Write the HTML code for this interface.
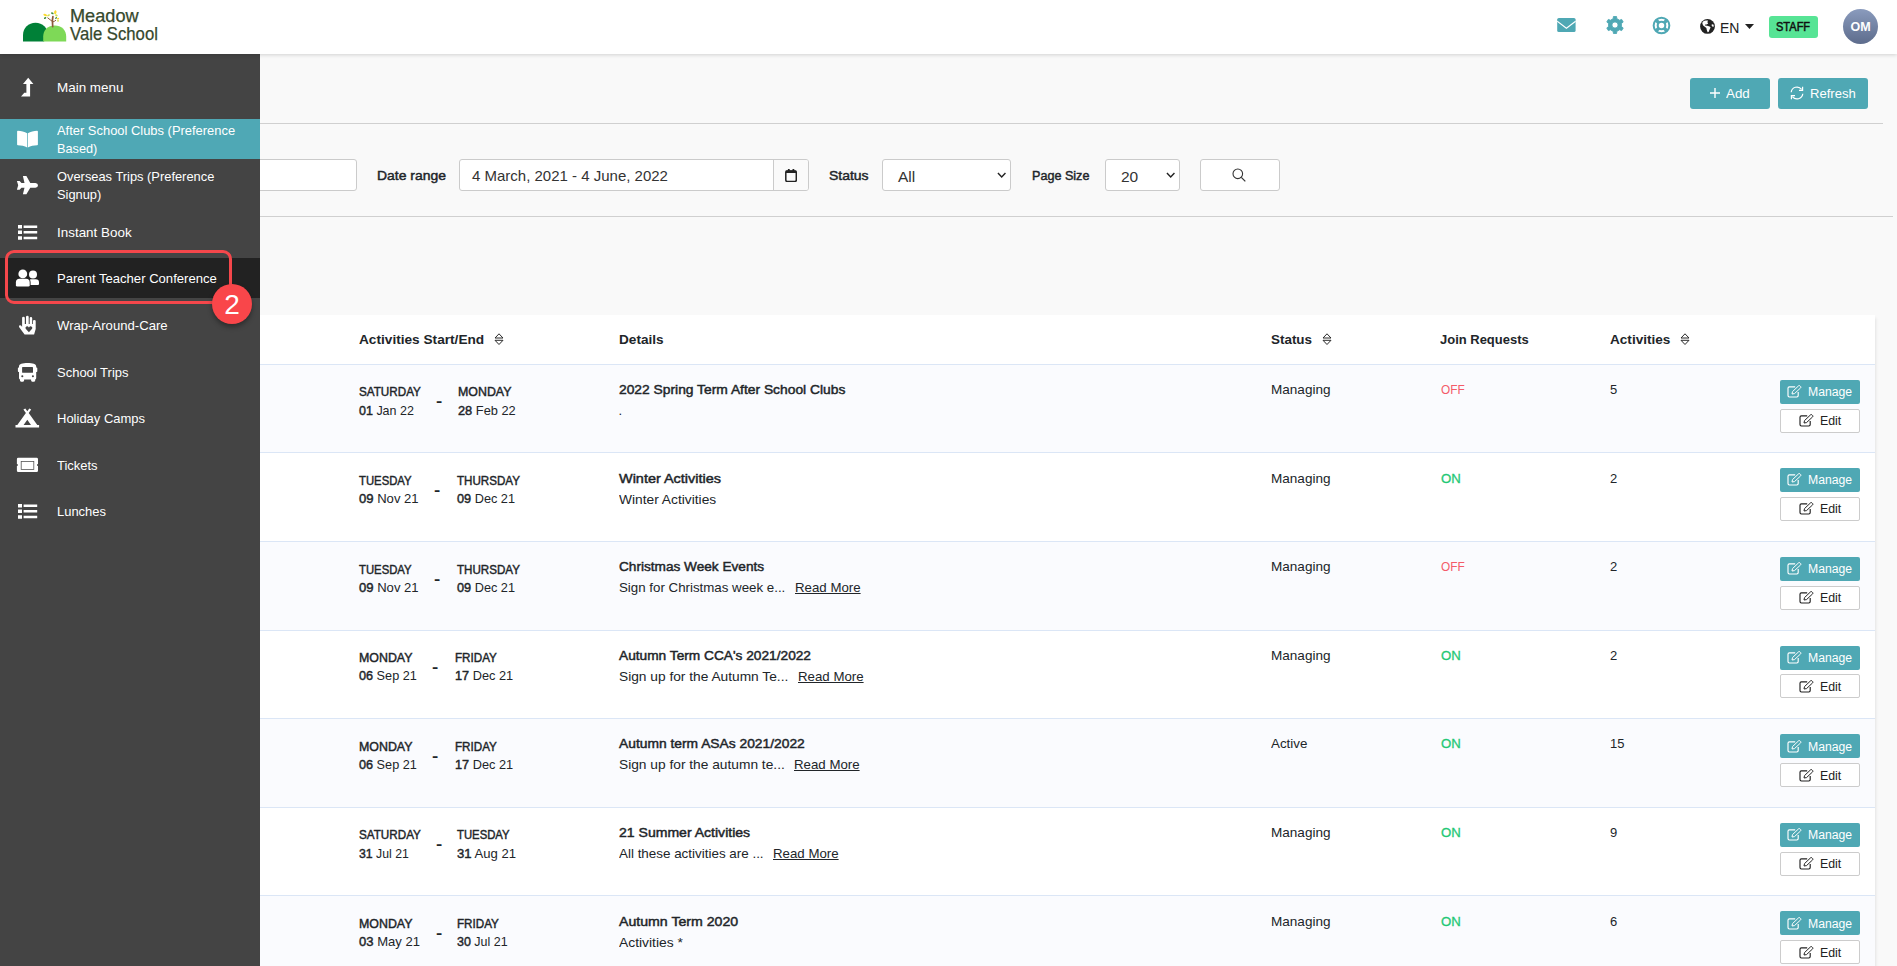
<!DOCTYPE html>
<html lang="en">
<head>
<meta charset="utf-8">
<title>After School Clubs (Preference Based)</title>
<style>
*{box-sizing:border-box;margin:0;padding:0}
html,body{width:1897px;height:966px;overflow:hidden}
body{font-family:"Liberation Sans",sans-serif;font-size:13px;color:#212529;background:#f9f9f9;position:relative}
.a{position:absolute;white-space:nowrap}
b{font-weight:bold}
.row b,.lbl{font-weight:normal;-webkit-text-stroke:.45px currentColor}
.on{font-weight:normal;-webkit-text-stroke:.3px currentColor}
.fx{display:inline-block;transform-origin:0 50%;white-space:nowrap}
#hdr{position:absolute;left:0;top:0;width:1897px;height:54px;background:#fff;box-shadow:0 1px 4px rgba(0,0,0,.16);z-index:5}
#side{position:absolute;left:0;top:54px;width:260px;height:912px;background:#444;z-index:4}
.mi{position:absolute;left:0;width:260px;height:40px;color:#fff}
.mi .tx{position:absolute;left:57px;top:12px;font-size:13px;line-height:17.5px;width:195px}
.mi .tx.two{top:3px}
.mi svg{position:absolute}
.mi.act{background:#4fa8b5}
.mi.hov{background:#222}
.btn{position:absolute;background:#4fa8b4;color:#fff;border-radius:3px;height:31px;top:78px}
.hr{position:absolute;height:1px;background:#d0d0d0;left:260px}
.inp{position:absolute;top:159px;height:32px;background:#fff;border:1px solid #cbcbcb;border-radius:3px}
.lbl{position:absolute;top:168px;font-size:13px;line-height:16px;white-space:nowrap}
#tbl{position:absolute;left:0;top:315px;width:1875px;height:660px;background:#fff;box-shadow:1px 3px 3px rgba(0,0,0,.09)}
.row{position:absolute;left:0;width:1875px;height:89px;border-top:1px solid #dbe6f6}
.row.odd{background:#fafbfe}
.th{position:absolute;top:17px;font-weight:bold;font-size:13px;line-height:16px;white-space:nowrap}
.c{position:absolute;white-space:nowrap;font-size:13px;line-height:16px}
.mbtn{position:absolute;left:1780px;width:80px;height:24px;border-radius:2px;font-size:12px}
.mbtn.m{background:#4fa8b4;color:#fff}
.mbtn.e{background:#fff;border:1px solid #ccc;color:#222}
.mbtn>span{position:absolute;top:4px;line-height:16px}
.mbtn svg{position:absolute}
.on{color:#1fc875}
.off{color:#f45b69}
</style>
</head>
<body>
<div class="btn" style="left:1690px;width:80px"><svg class="a" style="left:20px;top:10px" width="10" height="10" viewBox="0 0 10 10"><path d="M5 0 V10 M0 5 H10" stroke="#fff" stroke-width="1.4"/></svg><span class="a" style="left:36px;top:8px;line-height:16px;font-size:13px"><span class="fx" style="transform:scaleX(1.0285)">Add</span></span></div>
<div class="btn" style="left:1778px;width:90px"><svg class="a" style="left:12px;top:8px" width="14" height="14" viewBox="0 0 14 14"><path d="M1.2 6.2 A5.8 5.8 0 0 1 11.6 3.4 M12.8 7.8 A5.8 5.8 0 0 1 2.4 10.6" fill="none" stroke="#fff" stroke-width="1.2"/><path d="M12.6 0.8 V4.4 H9 M1.4 13.2 V9.6 H5" fill="none" stroke="#fff" stroke-width="1.2"/></svg><span class="a" style="left:32px;top:8px;line-height:16px;font-size:13px"><span class="fx" style="transform:scaleX(1.0037)">Refresh</span></span></div>
<div class="hr" style="top:123px;width:1623px"></div>
<div class="hr" style="top:216px;width:1633px"></div>
<div class="inp" style="left:100px;width:257px"></div>
<div class="lbl" style="left:377px"><span class="fx" style="transform:scaleX(1.0711)">Date range</span></div>
<div class="inp" style="left:459px;width:350px"><div class="a" style="left:12px;top:7px;font-size:15px;line-height:18px;color:#333">4 March, 2021 - 4 June, 2022</div><div class="a" style="left:313px;top:0;width:35px;height:30px;background:#fafafa;border-left:1px solid #cbcbcb;border-radius:0 2px 2px 0"></div><svg class="a" style="left:324.9px;top:8.6px" width="12.1" height="13.3" viewBox="0 0 12.1 13.3"><rect x="0.8" y="1.9" width="10.5" height="10.6" rx="1.4" fill="none" stroke="#222" stroke-width="1.5"/><path d="M0.8 1.6 H11.3 V3.9 H0.8 Z M2.9 0 H4.7 V1.8 H2.9 Z M7.5 0 H9.3 V1.8 H7.5 Z" fill="#222"/></svg></div>
<div class="lbl" style="left:829px"><span class="fx" style="transform:scaleX(1.0744)">Status</span></div>
<div class="inp" style="left:882px;width:129px"><div class="a" style="left:15px;top:7px;font-size:15.5px;line-height:20px;color:#333">All</div><svg class="a" style="left:113.5px;top:12.4px" width="9.4" height="6.6" viewBox="0 0 10 7"><path d="M1 1 L5 5.2 L9 1" fill="none" stroke="#222" stroke-width="1.5"/></svg></div>
<div class="lbl" style="left:1032px"><span class="fx" style="transform:scaleX(0.9685)">Page Size</span></div>
<div class="inp" style="left:1105px;width:75px"><div class="a" style="left:15px;top:7px;font-size:15.5px;line-height:20px;color:#333">20</div><svg class="a" style="left:59.5px;top:12.4px" width="9.4" height="6.6" viewBox="0 0 10 7"><path d="M1 1 L5 5.2 L9 1" fill="none" stroke="#222" stroke-width="1.5"/></svg></div>
<div class="inp" style="left:1200px;width:80px"><svg class="a" style="left:31px;top:8px" width="14" height="14" viewBox="0 0 14 14"><circle cx="5.8" cy="5.8" r="4.8" fill="none" stroke="#333" stroke-width="1.1"/><path d="M9.3 9.3 L13.3 13.3" stroke="#333" stroke-width="1.2"/></svg></div>
<div id="tbl">
<div class="th" style="left:359px"><span class="fx" style="transform:scaleX(1.0503)">Activities Start/End</span></div><svg class="a" style="left:493.5px;top:18px" width="10" height="13" viewBox="0 0 10 13"><path d="M5 0.8 L9 5 H1 Z M5 11.5 L9 7.3 H1 Z" fill="none" stroke="#2a2a2a" stroke-width="1" stroke-linejoin="miter"/></svg>
<div class="th" style="left:619px"><span class="fx" style="transform:scaleX(1.0460)">Details</span></div>
<div class="th" style="left:1271px"><span class="fx" style="transform:scaleX(1.0319)">Status</span></div><svg class="a" style="left:1321.5px;top:18px" width="10" height="13" viewBox="0 0 10 13"><path d="M5 0.8 L9 5 H1 Z M5 11.5 L9 7.3 H1 Z" fill="none" stroke="#2a2a2a" stroke-width="1" stroke-linejoin="miter"/></svg>
<div class="th" style="left:1440px"><span class="fx" style="transform:scaleX(0.9982)">Join Requests</span></div>
<div class="th" style="left:1610px"><span class="fx" style="transform:scaleX(1.0448)">Activities</span></div><svg class="a" style="left:1679.5px;top:18px" width="10" height="13" viewBox="0 0 10 13"><path d="M5 0.8 L9 5 H1 Z M5 11.5 L9 7.3 H1 Z" fill="none" stroke="#2a2a2a" stroke-width="1" stroke-linejoin="miter"/></svg>
<div class="row odd" style="top:49px"><div class="c" style="left:359px;top:19px"><span class="fx" style="transform:scaleX(0.8989)"><b>SATURDAY</b></span></div><div class="c" style="left:359px;top:38px"><span class="fx" style="transform:scaleX(0.9611)"><b>01</b> Jan 22</span></div><div class="c" style="left:436.2px;top:28px;font-size:15px;font-weight:bold;transform:scaleX(1.25);transform-origin:0 50%">-</div><div class="c" style="left:457.9px;top:19px"><span class="fx" style="transform:scaleX(0.9535)"><b>MONDAY</b></span></div><div class="c" style="left:457.9px;top:38px"><span class="fx" style="transform:scaleX(0.9853)"><b>28</b> Feb 22</span></div><div class="c" style="left:618.5px;top:17px"><span class="fx" style="transform:scaleX(1.0628)"><b>2022 Spring Term After School Clubs</b></span></div><div class="c" style="left:618.5px;top:38px">.</div><div class="c" style="left:1271px;top:17px"><span class="fx" style="transform:scaleX(1.0419)">Managing</span></div><div class="c off" style="left:1440.6px;top:17px"><span class="fx" style="transform:scaleX(0.9115)">OFF</span></div><div class="c" style="left:1610px;top:17px">5</div><div class="mbtn m" style="top:15px"><svg style="left:7px;top:5px" width="15" height="13" viewBox="0 0 15 13"><path d="M8.2 1.9 H2.4 Q1 1.9 1 3.3 V10.6 Q1 12 2.4 12 H9.8 Q11.2 12 11.2 10.6 V7" fill="none" stroke="#fff" stroke-width="1.15"/><path d="M5 9 L5.5 6.6 L11.6 0.8 Q12.3 0.3 13 0.9 L13.7 1.6 Q14.2 2.3 13.6 2.9 L7.5 8.6 Z" fill="none" stroke="#fff" stroke-width="1" stroke-linejoin="round"/></svg><span style="left:28px;top:4px"><span class="fx" style="transform:scaleX(1.0167)">Manage</span></span></div><div class="mbtn e" style="top:44px"><svg style="left:18px;top:4px" width="15" height="13" viewBox="0 0 15 13"><path d="M8.2 1.9 H2.4 Q1 1.9 1 3.3 V10.6 Q1 12 2.4 12 H9.8 Q11.2 12 11.2 10.6 V7" fill="none" stroke="#222" stroke-width="1.15"/><path d="M5 9 L5.5 6.6 L11.6 0.8 Q12.3 0.3 13 0.9 L13.7 1.6 Q14.2 2.3 13.6 2.9 L7.5 8.6 Z" fill="none" stroke="#222" stroke-width="1" stroke-linejoin="round"/></svg><span style="left:39px;top:3px"><span class="fx" style="transform:scaleX(1.0296)">Edit</span></span></div></div>
<div class="row" style="top:137px"><div class="c" style="left:359px;top:20px"><span class="fx" style="transform:scaleX(0.8703)"><b>TUESDAY</b></span></div><div class="c" style="left:359px;top:38px"><span class="fx" style="transform:scaleX(1.0054)"><b>09</b> Nov 21</span></div><div class="c" style="left:434.4px;top:29px;font-size:15px;font-weight:bold;transform:scaleX(1.25);transform-origin:0 50%">-</div><div class="c" style="left:456.6px;top:20px"><span class="fx" style="transform:scaleX(0.8930)"><b>THURSDAY</b></span></div><div class="c" style="left:456.6px;top:38px"><span class="fx" style="transform:scaleX(0.9784)"><b>09</b> Dec 21</span></div><div class="c" style="left:618.5px;top:18px"><span class="fx" style="transform:scaleX(1.1117)"><b>Winter Activities</b></span></div><div class="c" style="left:618.5px;top:39px"><span class="fx" style="transform:scaleX(1.0594)">Winter Activities</span></div><div class="c" style="left:1271px;top:18px"><span class="fx" style="transform:scaleX(1.0419)">Managing</span></div><div class="c on" style="left:1440.6px;top:18px"><span class="fx" style="transform:scaleX(1.0154)">ON</span></div><div class="c" style="left:1610px;top:18px">2</div><div class="mbtn m" style="top:15px"><svg style="left:7px;top:5px" width="15" height="13" viewBox="0 0 15 13"><path d="M8.2 1.9 H2.4 Q1 1.9 1 3.3 V10.6 Q1 12 2.4 12 H9.8 Q11.2 12 11.2 10.6 V7" fill="none" stroke="#fff" stroke-width="1.15"/><path d="M5 9 L5.5 6.6 L11.6 0.8 Q12.3 0.3 13 0.9 L13.7 1.6 Q14.2 2.3 13.6 2.9 L7.5 8.6 Z" fill="none" stroke="#fff" stroke-width="1" stroke-linejoin="round"/></svg><span style="left:28px;top:4px"><span class="fx" style="transform:scaleX(1.0167)">Manage</span></span></div><div class="mbtn e" style="top:44px"><svg style="left:18px;top:4px" width="15" height="13" viewBox="0 0 15 13"><path d="M8.2 1.9 H2.4 Q1 1.9 1 3.3 V10.6 Q1 12 2.4 12 H9.8 Q11.2 12 11.2 10.6 V7" fill="none" stroke="#222" stroke-width="1.15"/><path d="M5 9 L5.5 6.6 L11.6 0.8 Q12.3 0.3 13 0.9 L13.7 1.6 Q14.2 2.3 13.6 2.9 L7.5 8.6 Z" fill="none" stroke="#222" stroke-width="1" stroke-linejoin="round"/></svg><span style="left:39px;top:3px"><span class="fx" style="transform:scaleX(1.0296)">Edit</span></span></div></div>
<div class="row odd" style="top:226px"><div class="c" style="left:359px;top:20px"><span class="fx" style="transform:scaleX(0.8703)"><b>TUESDAY</b></span></div><div class="c" style="left:359px;top:38px"><span class="fx" style="transform:scaleX(1.0054)"><b>09</b> Nov 21</span></div><div class="c" style="left:434.4px;top:29px;font-size:15px;font-weight:bold;transform:scaleX(1.25);transform-origin:0 50%">-</div><div class="c" style="left:456.6px;top:20px"><span class="fx" style="transform:scaleX(0.8930)"><b>THURSDAY</b></span></div><div class="c" style="left:456.6px;top:38px"><span class="fx" style="transform:scaleX(0.9784)"><b>09</b> Dec 21</span></div><div class="c" style="left:618.5px;top:17px"><span class="fx" style="transform:scaleX(1.0479)"><b>Christmas Week Events</b></span></div><div class="c" style="left:618.5px;top:38px"><span class="fx" style="transform:scaleX(1.0230)">Sign for Christmas week e...</span></div><div class="c" style="left:795.2px;top:38px"><span class="fx" style="transform:scaleX(1.0200)"><u>Read More</u></span></div><div class="c" style="left:1271px;top:17px"><span class="fx" style="transform:scaleX(1.0419)">Managing</span></div><div class="c off" style="left:1440.6px;top:17px"><span class="fx" style="transform:scaleX(0.9115)">OFF</span></div><div class="c" style="left:1610px;top:17px">2</div><div class="mbtn m" style="top:15px"><svg style="left:7px;top:5px" width="15" height="13" viewBox="0 0 15 13"><path d="M8.2 1.9 H2.4 Q1 1.9 1 3.3 V10.6 Q1 12 2.4 12 H9.8 Q11.2 12 11.2 10.6 V7" fill="none" stroke="#fff" stroke-width="1.15"/><path d="M5 9 L5.5 6.6 L11.6 0.8 Q12.3 0.3 13 0.9 L13.7 1.6 Q14.2 2.3 13.6 2.9 L7.5 8.6 Z" fill="none" stroke="#fff" stroke-width="1" stroke-linejoin="round"/></svg><span style="left:28px;top:4px"><span class="fx" style="transform:scaleX(1.0167)">Manage</span></span></div><div class="mbtn e" style="top:44px"><svg style="left:18px;top:4px" width="15" height="13" viewBox="0 0 15 13"><path d="M8.2 1.9 H2.4 Q1 1.9 1 3.3 V10.6 Q1 12 2.4 12 H9.8 Q11.2 12 11.2 10.6 V7" fill="none" stroke="#222" stroke-width="1.15"/><path d="M5 9 L5.5 6.6 L11.6 0.8 Q12.3 0.3 13 0.9 L13.7 1.6 Q14.2 2.3 13.6 2.9 L7.5 8.6 Z" fill="none" stroke="#222" stroke-width="1" stroke-linejoin="round"/></svg><span style="left:39px;top:3px"><span class="fx" style="transform:scaleX(1.0296)">Edit</span></span></div></div>
<div class="row" style="top:315px"><div class="c" style="left:359px;top:19px"><span class="fx" style="transform:scaleX(0.9535)"><b>MONDAY</b></span></div><div class="c" style="left:359px;top:37px"><span class="fx" style="transform:scaleX(0.9748)"><b>06</b> Sep 21</span></div><div class="c" style="left:432.4px;top:28px;font-size:15px;font-weight:bold;transform:scaleX(1.25);transform-origin:0 50%">-</div><div class="c" style="left:454.7px;top:19px"><span class="fx" style="transform:scaleX(0.8969)"><b>FRIDAY</b></span></div><div class="c" style="left:454.7px;top:37px"><span class="fx" style="transform:scaleX(0.9818)"><b>17</b> Dec 21</span></div><div class="c" style="left:618.5px;top:17px"><span class="fx" style="transform:scaleX(1.0539)"><b>Autumn Term CCA's 2021/2022</b></span></div><div class="c" style="left:618.5px;top:38px"><span class="fx" style="transform:scaleX(1.0568)">Sign up for the Autumn Te...</span></div><div class="c" style="left:797.8px;top:38px"><span class="fx" style="transform:scaleX(1.0200)"><u>Read More</u></span></div><div class="c" style="left:1271px;top:17px"><span class="fx" style="transform:scaleX(1.0419)">Managing</span></div><div class="c on" style="left:1440.6px;top:17px"><span class="fx" style="transform:scaleX(1.0154)">ON</span></div><div class="c" style="left:1610px;top:17px">2</div><div class="mbtn m" style="top:15px"><svg style="left:7px;top:5px" width="15" height="13" viewBox="0 0 15 13"><path d="M8.2 1.9 H2.4 Q1 1.9 1 3.3 V10.6 Q1 12 2.4 12 H9.8 Q11.2 12 11.2 10.6 V7" fill="none" stroke="#fff" stroke-width="1.15"/><path d="M5 9 L5.5 6.6 L11.6 0.8 Q12.3 0.3 13 0.9 L13.7 1.6 Q14.2 2.3 13.6 2.9 L7.5 8.6 Z" fill="none" stroke="#fff" stroke-width="1" stroke-linejoin="round"/></svg><span style="left:28px;top:4px"><span class="fx" style="transform:scaleX(1.0167)">Manage</span></span></div><div class="mbtn e" style="top:43px"><svg style="left:18px;top:5px" width="15" height="13" viewBox="0 0 15 13"><path d="M8.2 1.9 H2.4 Q1 1.9 1 3.3 V10.6 Q1 12 2.4 12 H9.8 Q11.2 12 11.2 10.6 V7" fill="none" stroke="#222" stroke-width="1.15"/><path d="M5 9 L5.5 6.6 L11.6 0.8 Q12.3 0.3 13 0.9 L13.7 1.6 Q14.2 2.3 13.6 2.9 L7.5 8.6 Z" fill="none" stroke="#222" stroke-width="1" stroke-linejoin="round"/></svg><span style="left:39px;top:4px"><span class="fx" style="transform:scaleX(1.0296)">Edit</span></span></div></div>
<div class="row odd" style="top:403px"><div class="c" style="left:359px;top:20px"><span class="fx" style="transform:scaleX(0.9535)"><b>MONDAY</b></span></div><div class="c" style="left:359px;top:38px"><span class="fx" style="transform:scaleX(0.9748)"><b>06</b> Sep 21</span></div><div class="c" style="left:432.4px;top:29px;font-size:15px;font-weight:bold;transform:scaleX(1.25);transform-origin:0 50%">-</div><div class="c" style="left:454.7px;top:20px"><span class="fx" style="transform:scaleX(0.8969)"><b>FRIDAY</b></span></div><div class="c" style="left:454.7px;top:38px"><span class="fx" style="transform:scaleX(0.9818)"><b>17</b> Dec 21</span></div><div class="c" style="left:618.5px;top:17px"><span class="fx" style="transform:scaleX(1.0624)"><b>Autumn term ASAs 2021/2022</b></span></div><div class="c" style="left:618.5px;top:38px"><span class="fx" style="transform:scaleX(1.0572)">Sign up for the autumn te...</span></div><div class="c" style="left:794.2px;top:38px"><span class="fx" style="transform:scaleX(1.0200)"><u>Read More</u></span></div><div class="c" style="left:1271px;top:17px"><span class="fx" style="transform:scaleX(1.0281)">Active</span></div><div class="c on" style="left:1440.6px;top:17px"><span class="fx" style="transform:scaleX(1.0154)">ON</span></div><div class="c" style="left:1610px;top:17px">15</div><div class="mbtn m" style="top:15px"><svg style="left:7px;top:6px" width="15" height="13" viewBox="0 0 15 13"><path d="M8.2 1.9 H2.4 Q1 1.9 1 3.3 V10.6 Q1 12 2.4 12 H9.8 Q11.2 12 11.2 10.6 V7" fill="none" stroke="#fff" stroke-width="1.15"/><path d="M5 9 L5.5 6.6 L11.6 0.8 Q12.3 0.3 13 0.9 L13.7 1.6 Q14.2 2.3 13.6 2.9 L7.5 8.6 Z" fill="none" stroke="#fff" stroke-width="1" stroke-linejoin="round"/></svg><span style="left:28px;top:5px"><span class="fx" style="transform:scaleX(1.0167)">Manage</span></span></div><div class="mbtn e" style="top:44px"><svg style="left:18px;top:5px" width="15" height="13" viewBox="0 0 15 13"><path d="M8.2 1.9 H2.4 Q1 1.9 1 3.3 V10.6 Q1 12 2.4 12 H9.8 Q11.2 12 11.2 10.6 V7" fill="none" stroke="#222" stroke-width="1.15"/><path d="M5 9 L5.5 6.6 L11.6 0.8 Q12.3 0.3 13 0.9 L13.7 1.6 Q14.2 2.3 13.6 2.9 L7.5 8.6 Z" fill="none" stroke="#222" stroke-width="1" stroke-linejoin="round"/></svg><span style="left:39px;top:4px"><span class="fx" style="transform:scaleX(1.0296)">Edit</span></span></div></div>
<div class="row" style="top:492px"><div class="c" style="left:359px;top:19px"><span class="fx" style="transform:scaleX(0.8989)"><b>SATURDAY</b></span></div><div class="c" style="left:359px;top:38px"><span class="fx" style="transform:scaleX(0.9435)"><b>31</b> Jul 21</span></div><div class="c" style="left:436.4px;top:28px;font-size:15px;font-weight:bold;transform:scaleX(1.25);transform-origin:0 50%">-</div><div class="c" style="left:457.4px;top:19px"><span class="fx" style="transform:scaleX(0.8703)"><b>TUESDAY</b></span></div><div class="c" style="left:457.4px;top:38px"><span class="fx" style="transform:scaleX(1.0072)"><b>31</b> Aug 21</span></div><div class="c" style="left:618.5px;top:17px"><span class="fx" style="transform:scaleX(1.0801)"><b>21 Summer Activities</b></span></div><div class="c" style="left:618.5px;top:38px"><span class="fx" style="transform:scaleX(1.0316)">All these activities are ...</span></div><div class="c" style="left:773px;top:38px"><span class="fx" style="transform:scaleX(1.0200)"><u>Read More</u></span></div><div class="c" style="left:1271px;top:17px"><span class="fx" style="transform:scaleX(1.0419)">Managing</span></div><div class="c on" style="left:1440.6px;top:17px"><span class="fx" style="transform:scaleX(1.0154)">ON</span></div><div class="c" style="left:1610px;top:17px">9</div><div class="mbtn m" style="top:15px"><svg style="left:7px;top:5px" width="15" height="13" viewBox="0 0 15 13"><path d="M8.2 1.9 H2.4 Q1 1.9 1 3.3 V10.6 Q1 12 2.4 12 H9.8 Q11.2 12 11.2 10.6 V7" fill="none" stroke="#fff" stroke-width="1.15"/><path d="M5 9 L5.5 6.6 L11.6 0.8 Q12.3 0.3 13 0.9 L13.7 1.6 Q14.2 2.3 13.6 2.9 L7.5 8.6 Z" fill="none" stroke="#fff" stroke-width="1" stroke-linejoin="round"/></svg><span style="left:28px;top:4px"><span class="fx" style="transform:scaleX(1.0167)">Manage</span></span></div><div class="mbtn e" style="top:44px"><svg style="left:18px;top:4px" width="15" height="13" viewBox="0 0 15 13"><path d="M8.2 1.9 H2.4 Q1 1.9 1 3.3 V10.6 Q1 12 2.4 12 H9.8 Q11.2 12 11.2 10.6 V7" fill="none" stroke="#222" stroke-width="1.15"/><path d="M5 9 L5.5 6.6 L11.6 0.8 Q12.3 0.3 13 0.9 L13.7 1.6 Q14.2 2.3 13.6 2.9 L7.5 8.6 Z" fill="none" stroke="#222" stroke-width="1" stroke-linejoin="round"/></svg><span style="left:39px;top:3px"><span class="fx" style="transform:scaleX(1.0296)">Edit</span></span></div></div>
<div class="row odd" style="top:580px"><div class="c" style="left:359px;top:20px"><span class="fx" style="transform:scaleX(0.9535)"><b>MONDAY</b></span></div><div class="c" style="left:359px;top:38px"><span class="fx" style="transform:scaleX(1.0030)"><b>03</b> May 21</span></div><div class="c" style="left:436.4px;top:29px;font-size:15px;font-weight:bold;transform:scaleX(1.25);transform-origin:0 50%">-</div><div class="c" style="left:457.4px;top:20px"><span class="fx" style="transform:scaleX(0.8969)"><b>FRIDAY</b></span></div><div class="c" style="left:457.4px;top:38px"><span class="fx" style="transform:scaleX(0.9587)"><b>30</b> Jul 21</span></div><div class="c" style="left:618.5px;top:18px"><span class="fx" style="transform:scaleX(1.0875)"><b>Autumn Term 2020</b></span></div><div class="c" style="left:618.5px;top:39px"><span class="fx" style="transform:scaleX(1.0656)">Activities *</span></div><div class="c" style="left:1271px;top:18px"><span class="fx" style="transform:scaleX(1.0419)">Managing</span></div><div class="c on" style="left:1440.6px;top:18px"><span class="fx" style="transform:scaleX(1.0154)">ON</span></div><div class="c" style="left:1610px;top:18px">6</div><div class="mbtn m" style="top:15px"><svg style="left:7px;top:6px" width="15" height="13" viewBox="0 0 15 13"><path d="M8.2 1.9 H2.4 Q1 1.9 1 3.3 V10.6 Q1 12 2.4 12 H9.8 Q11.2 12 11.2 10.6 V7" fill="none" stroke="#fff" stroke-width="1.15"/><path d="M5 9 L5.5 6.6 L11.6 0.8 Q12.3 0.3 13 0.9 L13.7 1.6 Q14.2 2.3 13.6 2.9 L7.5 8.6 Z" fill="none" stroke="#fff" stroke-width="1" stroke-linejoin="round"/></svg><span style="left:28px;top:5px"><span class="fx" style="transform:scaleX(1.0167)">Manage</span></span></div><div class="mbtn e" style="top:44px"><svg style="left:18px;top:5px" width="15" height="13" viewBox="0 0 15 13"><path d="M8.2 1.9 H2.4 Q1 1.9 1 3.3 V10.6 Q1 12 2.4 12 H9.8 Q11.2 12 11.2 10.6 V7" fill="none" stroke="#222" stroke-width="1.15"/><path d="M5 9 L5.5 6.6 L11.6 0.8 Q12.3 0.3 13 0.9 L13.7 1.6 Q14.2 2.3 13.6 2.9 L7.5 8.6 Z" fill="none" stroke="#222" stroke-width="1" stroke-linejoin="round"/></svg><span style="left:39px;top:4px"><span class="fx" style="transform:scaleX(1.0296)">Edit</span></span></div></div>
</div>
<div id="side">
<div class="mi" style="top:13px"><svg style="left:0;top:0" width="56" height="40" viewBox="0 0 56 40"><path d="M28.2 10.7 L33.4 16.9 H30.1 V29.5 H21 L24.3 25.8 H26.4 V16.9 H23 Z" fill="#fff"/></svg><div class="tx"><span class="fx" style="transform:scaleX(1.0325)">Main menu</span></div></div>
<div class="mi act" style="top:65px"><svg style="left:0;top:0" width="56" height="40" viewBox="0 0 56 40"><path d="M17.1 12.4 Q17.1 11.7 17.9 11.7 C21 11.8 24.6 12.6 27.15 14.2 V28.4 C24.6 27 21 26.3 17.9 26.3 Q17.1 26.3 17.1 25.6 Z M37.9 12.4 Q37.9 11.7 37.1 11.7 C34 11.8 30.4 12.6 27.85 14.2 V28.4 C30.4 27 34 26.3 37.1 26.3 Q37.9 26.3 37.9 25.6 Z" fill="#fff"/></svg><div class="tx two"><span class="fx" style="transform:scaleX(0.9938)">After School Clubs (Preference</span><br><span class="fx" style="transform:scaleX(0.9781)">Based)</span></div></div>
<div class="mi" style="top:111px"><svg style="left:0;top:0" width="56" height="40" viewBox="0 0 56 40"><path d="M16.9 16 H19.6 L21.5 17.9 H24.5 L22.9 11 H26.4 L30.3 17.9 H35.4 Q38 18 38 20.3 Q38 22.6 35.4 22.7 H30.3 L26.4 29.2 H22.9 L24.5 22.7 H21.5 L19.6 24.7 H16.9 L18.2 20.3 Z" fill="#fff"/></svg><div class="tx two"><span class="fx" style="transform:scaleX(0.9896)">Overseas Trips (Preference</span><br><span class="fx" style="transform:scaleX(0.9886)">Signup)</span></div></div>
<div class="mi" style="top:158px"><svg style="left:0;top:0" width="56" height="40" viewBox="0 0 56 40"><path d="M18 12.9 h4 v3.6 h-4z M18 18.5 h4 v3.6 h-4z M18 24.2 h4 v3.6 h-4z M23.6 13.5 h13.6 v2.4 h-13.6z M23.6 19.1 h13.6 v2.4 h-13.6z M23.6 24.8 h13.6 v2.4 h-13.6z" fill="#fff"/></svg><div class="tx"><span class="fx" style="transform:scaleX(1.0321)">Instant Book</span></div></div>
<div class="mi hov" style="top:204px"><svg style="left:0;top:0" width="56" height="40" viewBox="0 0 56 40"><circle cx="22.8" cy="15.9" r="4.4" fill="#fff"/><path d="M15.9 27.2 V24.4 Q15.9 20.8 19.5 20.8 H26.1 Q29.7 20.8 29.7 24.4 V27.2 Q29.7 28.6 28.3 28.6 H17.3 Q15.9 28.6 15.9 27.2 Z" fill="#fff"/><circle cx="33" cy="16.6" r="4" fill="#fff"/><path d="M30.6 27.1 V24.4 Q30.6 22.4 29.8 21.4 Q30.4 21.2 31.2 21.2 H35.8 Q39 21.2 39 24.4 V26 Q39 27.1 37.9 27.1 Z" fill="#fff"/></svg><div class="tx"><span class="fx" style="transform:scaleX(1.0066)">Parent Teacher Conference</span></div></div>
<div class="mi" style="top:251px"><svg style="left:0;top:0" width="56" height="40" viewBox="0 0 56 40"><path d="M22.1 22 V13 Q22.1 11.8 23.45 11.8 Q24.8 11.8 24.8 13 V19 H26 V12 Q26 10.8 27.35 10.8 Q28.7 10.8 28.7 12 V19 H29.7 V13.2 Q29.7 12 30.95 12 Q32.2 12 32.2 13.2 V19 H33 V16.1 Q33 14.9 34.35 14.9 Q35.7 14.9 35.7 16.1 V24 L34.1 29.4 H24.6 L19.2 22.2 Q18.5 20.8 19.7 20.2 Q20.8 19.9 21.5 20.9 Z" fill="#fff"/><path d="M28.9 27.2 L25.7 23.8 Q24.9 22.2 26.4 21.4 Q27.9 21 28.9 22.5 Q29.9 21 31.4 21.4 Q32.9 22.2 32.1 23.8 Z" fill="#444"/></svg><div class="tx"><span class="fx" style="transform:scaleX(1.0092)">Wrap-Around-Care</span></div></div>
<div class="mi" style="top:297.5px"><svg style="left:0;top:0" width="56" height="40" viewBox="0 0 56 40"><g transform="translate(0 -0.4)"><path d="M27.6 11.3 C22.5 11.3 19 12.4 19 14.6 V16 H18.6 Q17.9 16 17.9 16.7 V19.7 Q17.9 20.4 18.6 20.4 H19 V26.4 Q19 27.6 20 27.8 V29 Q20 30.1 21.1 30.1 H23 Q24.1 30.1 24.1 29 V27.8 H31.1 V29 Q31.1 30.1 32.2 30.1 H34.1 Q35.2 30.1 35.2 29 V27.8 Q36.2 27.6 36.2 26.4 V20.4 H36.6 Q37.3 20.4 37.3 19.7 V16.7 Q37.3 16 36.6 16 H36.2 V14.6 C36.2 12.4 32.7 11.3 27.6 11.3 Z" fill="#fff"/><rect x="22.1" y="15.4" width="10.9" height="5.8" rx="0.6" fill="#444"/><circle cx="22.3" cy="24.6" r="1.05" fill="#444"/><circle cx="32.9" cy="24.6" r="1.05" fill="#444"/></g></svg><div class="tx"><span class="fx" style="transform:scaleX(0.9993)">School Trips</span></div></div>
<div class="mi" style="top:344px"><svg style="left:0;top:0" width="56" height="40" viewBox="0 0 56 40"><path d="M15.5 27.1 H17.3 L25.9 15 L23.4 11.6 L25.3 10.6 L27.3 13.3 L29.3 10.6 L31.2 11.6 L28.7 15 L37.3 27.1 H39.1 V29.4 H15.5 Z M27.3 21.7 L23.6 27.1 H31 Z" fill="#fff" fill-rule="evenodd"/></svg><div class="tx"><span class="fx" style="transform:scaleX(0.9994)">Holiday Camps</span></div></div>
<div class="mi" style="top:390.5px"><svg style="left:0;top:0" width="56" height="40" viewBox="0 0 56 40"><g transform="translate(0 -0.5)"><path d="M18.3 13.3 H36.6 Q38 13.3 38 14.7 V19.5 Q37 19.6 37 20.5 Q37 21.4 38 21.5 V26.2 Q38 27.6 36.6 27.6 H18.3 Q16.9 27.6 16.9 26.2 V21.5 Q17.9 21.4 17.9 20.5 Q17.9 19.6 16.9 19.5 V14.7 Q16.9 13.3 18.3 13.3 Z" fill="#fff"/><rect x="21.2" y="16.9" width="12.6" height="8" fill="none" stroke="#555" stroke-width="0.8"/></g></svg><div class="tx"><span class="fx" style="transform:scaleX(0.9975)">Tickets</span></div></div>
<div class="mi" style="top:437px"><svg style="left:0;top:0" width="56" height="40" viewBox="0 0 56 40"><path d="M18 12.9 h4 v3.6 h-4z M18 18.5 h4 v3.6 h-4z M18 24.2 h4 v3.6 h-4z M23.6 13.5 h13.6 v2.4 h-13.6z M23.6 19.1 h13.6 v2.4 h-13.6z M23.6 24.8 h13.6 v2.4 h-13.6z" fill="#fff"/></svg><div class="tx"><span class="fx" style="transform:scaleX(0.9968)">Lunches</span></div></div>
<div class="a" style="left:5px;top:196px;width:227px;height:54px;border:3px solid #f5474b;border-radius:9px"></div>
<div class="a" style="left:212px;top:230px;width:40px;height:40px;border-radius:20px;background:#f9464a;box-shadow:0 3px 5px rgba(0,0,0,.35);color:#fff;font-size:28px;line-height:41.5px;text-align:center">2</div>
</div>
<div id="hdr">
<svg class="a" style="left:22px;top:8px" width="46" height="36" viewBox="0 0 46 36">
<path d="M1 33.5 V27 C1 20 6.5 14.8 13.5 14.8 C20.5 14.8 26 20 26 27 L22 33.5 Z" fill="#008037"/>
<path d="M21.2 33.5 V28.5 C21.2 22 26 17.4 32.7 17.4 C39.4 17.4 44.2 22 44.2 28.5 V33.5 Z" fill="#7ed957"/>
<path d="M30.7 18.6 L30.4 12.4 L30.9 8.6" stroke="#8c5a3a" stroke-width="1.7" fill="none" stroke-linecap="round"/>
<path d="M30.4 13.4 L28.2 11.8 L25.8 9.9 M30.6 14 L32.6 13.2 L33.7 12.3" stroke="#8c5a3a" stroke-width="1" fill="none" stroke-linecap="round"/>
<ellipse cx="23.2" cy="7" rx="1.9" ry="1.1" fill="#fbd92f" transform="rotate(20 23.2 7)"/>
<ellipse cx="26.6" cy="7.3" rx="1.5" ry="0.9" fill="#d4e24c" transform="rotate(-30 26.6 7.3)"/>
<ellipse cx="23.1" cy="10" rx="1.3" ry="0.8" fill="#3c8c3a" transform="rotate(-35 23.1 10)"/>
<ellipse cx="30.3" cy="5.3" rx="1.4" ry="0.8" fill="#3c8c3a" transform="rotate(25 30.3 5.3)"/>
<ellipse cx="33.3" cy="4.3" rx="1.2" ry="2" fill="#fbd92f" transform="rotate(10 33.3 4.3)"/>
<ellipse cx="34.4" cy="7.4" rx="1.4" ry="0.9" fill="#d4e24c" transform="rotate(30 34.4 7.4)"/>
<ellipse cx="34.1" cy="10" rx="1.1" ry="0.8" fill="#3c8c3a" transform="rotate(-40 34.1 10)"/>
<ellipse cx="36" cy="10.7" rx="1.2" ry="0.8" fill="#fbd92f" transform="rotate(-10 36 10.7)"/>
<ellipse cx="36" cy="12.8" rx="1" ry="0.9" fill="#d4e24c"/>
</svg>
<div class="a" style="left:70px;top:4px;font-size:17.7px;line-height:24px;color:#35482c;-webkit-text-stroke:.25px #35482c"><span class="fx" style="transform:scaleX(1.0260)">Meadow</span></div>
<div class="a" style="left:70px;top:22px;font-size:17.7px;line-height:24px;color:#35482c;-webkit-text-stroke:.25px #35482c"><span class="fx" style="transform:scaleX(0.9442)">Vale School</span></div>
<svg class="a" style="left:1557.1px;top:18px" width="19" height="14" viewBox="0 0 19 14"><rect x="0.2" y="0" width="18.4" height="14" rx="1.6" fill="#4fa8b4"/><path d="M0.2 3.2 L9.4 10.3 L18.6 3.2" fill="none" stroke="#fff" stroke-width="1.1"/></svg>
<svg class="a" style="left:1605.6px;top:16.1px" width="18" height="18" viewBox="0 0 18 18"><path d="M7.46 0.44 L10.54 0.44 L10.84 2.66 L13.57 4.24 L15.65 3.38 L17.19 6.05 L15.41 7.43 L15.41 10.57 L17.19 11.95 L15.65 14.62 L13.57 13.76 L10.84 15.34 L10.54 17.56 L7.46 17.56 L7.16 15.34 L4.43 13.76 L2.35 14.62 L0.81 11.95 L2.59 10.57 L2.59 7.43 L0.81 6.05 L2.35 3.38 L4.43 4.24 L7.16 2.66 Z M5.90 9.00 a3.1 3.1 0 1 0 6.2 0 a3.1 3.1 0 1 0 -6.2 0 Z" fill="#4fa8b4" fill-rule="evenodd" stroke="#4fa8b4" stroke-width="0.9" stroke-linejoin="round"/></svg>
<svg class="a" style="left:1652.3px;top:15.6px" width="19" height="19" viewBox="0 0 19 19"><circle cx="9.5" cy="9.5" r="7.85" fill="none" stroke="#4fa8b4" stroke-width="2"/><circle cx="9.5" cy="9.5" r="3.8" fill="none" stroke="#4fa8b4" stroke-width="2.1"/><path d="M3.9 3.9 L6.7 6.7 M15.1 3.9 L12.3 6.7 M3.9 15.1 L6.7 12.3 M15.1 15.1 L12.3 12.3" stroke="#4fa8b4" stroke-width="3.4"/></svg>
<svg class="a" style="left:1700px;top:19px" width="15" height="15" viewBox="0 0 15 15"><circle cx="7.5" cy="7.4" r="7.4" fill="#222"/><path d="M2.5 3.2 Q3.4 1.9 5.6 1.6 L8 1.4 L7.4 3.2 L8.2 4.6 L6.6 5.6 L5.2 5.6 L5 6.4 L7.2 6.8 L9.6 7.4 L10.6 8.6 L9.6 10.6 L8.6 13 L7.6 13.2 L6.8 11 L6.4 9 L4.8 7.8 L3.2 6.4 L2.4 4.8 Z M11.8 5.2 L13.4 5.6 L13.9 7.6 L12.6 7.8 L11.6 6.6 Z" fill="#fff"/></svg>
<div class="a" style="left:1720px;top:18px;font-size:15.4px;line-height:20px;color:#222"><span class="fx" style="transform:scaleX(0.9069)">EN</span></div>
<svg class="a" style="left:1745px;top:24px" width="9" height="5" viewBox="0 0 9 5"><path d="M0 0 H9 L4.5 5 Z" fill="#222"/></svg>
<div class="a" style="left:1769px;top:16px;width:49px;height:22px;border-radius:3px;background:#57e495;color:#111;font-weight:normal;-webkit-text-stroke:.5px #111;font-size:12px;line-height:22px;text-align:left;padding-left:7px"><span class="fx" style="transform:scaleX(0.9189)">STAFF</span></div>
<div class="a" style="left:1843px;top:9px;width:35px;height:35px;border-radius:18px;background:linear-gradient(#8a9bbd,#5d6c8c);color:#fff;font-weight:bold;font-size:12.5px;line-height:36.5px;text-align:center">OM</div>
</div>
</body>
</html>
